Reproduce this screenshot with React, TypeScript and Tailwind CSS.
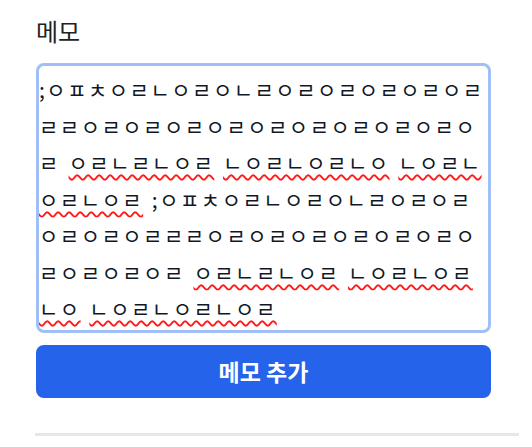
const longRun = ';ㅇㅍㅊㅇㄹㄴㅇㄹㅇㄴㄹ' + 'ㅇㄹ'.repeat(5) + 'ㄹㄹ' + 'ㅇㄹ'.repeat(10);
const flagged = ['ㅇㄹㄴㄹㄴㅇㄹ', 'ㄴㅇㄹㄴㅇㄹㄴㅇ', 'ㄴㅇㄹㄴㅇㄹㄴㅇㄹ'];

function MemoBlock() {
  return (
    <>
      {longRun}
      {flagged.map((w, i) => (
        <span key={i}>
          {' '}
          <span className="underline decoration-wavy decoration-[#ff1a1a] decoration-[1.5px] underline-offset-[3px]">{w}</span>
        </span>
      ))}
    </>
  );
}

export default function App() {
  return (
    <div
      className="w-[532px] h-[447px] overflow-hidden bg-white"
      style={{ fontFamily: '"Noto Sans CJK KR", "Noto Sans", sans-serif' }}
    >
      <div className="pl-[36px] pr-[41px]">
        {/* Label */}
        <div className="pt-[15px] mb-[16px] text-[24px] leading-[32px] text-[#222]">메모</div>

        {/* Memo input (focused) */}
        <div className="h-[270px] border-[3px] border-[#a0bff6] rounded-lg px-0 py-[5px] text-[21px] leading-[36.5px] tracking-[1.5px] [word-spacing:2.5px] text-gray-900 overflow-hidden">
          <MemoBlock /> <MemoBlock />
        </div>

        {/* Submit */}
        <button className="mt-3 w-full h-[53px] rounded-lg bg-[#2563eb] text-white text-[23px] font-bold">
          메모 추가
        </button>
      </div>

      {/* Divider */}
      <div className="mt-[35px] ml-[35px] w-[484px] h-[3px] bg-gray-200" />
    </div>
  );
}
